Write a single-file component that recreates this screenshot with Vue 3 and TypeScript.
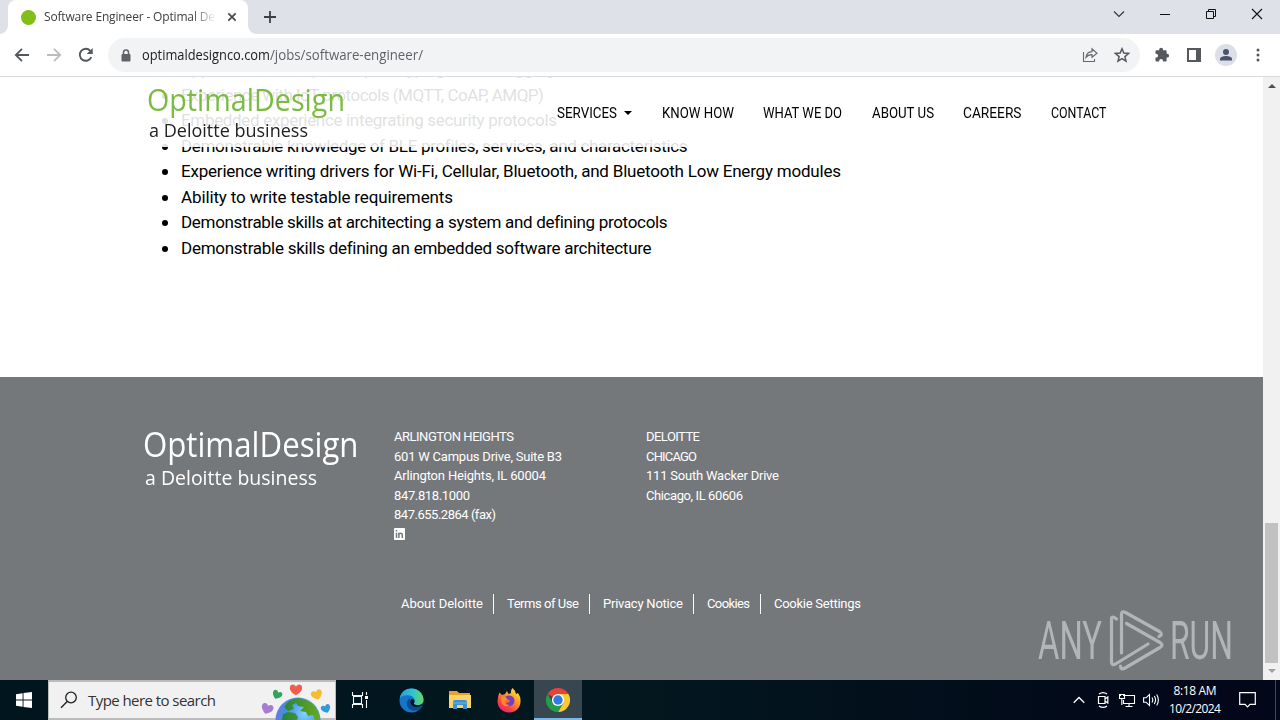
<script setup lang="ts">
import type { Directive } from 'vue'

// Fits a line of text to the given width, by tracking or, with .squeeze, by narrowing the glyphs.
const vFit: Directive<HTMLElement, number, 'squeeze'> = {
  mounted(el, { value, modifiers }) {
    const natural = el.getBoundingClientRect().width
    const count = (el.textContent ?? '').length
    if (modifiers.squeeze) {
      el.style.display = 'inline-block'
      el.style.transformOrigin = '0 50%'
      el.style.transform = `scaleX(${(value / natural).toFixed(4)})`
      el.style.marginRight = `${(value - natural).toFixed(2)}px`
    } else if (count > 1) {
      const gap = (value - natural) / (count - 1)
      el.style.letterSpacing = `${gap.toFixed(4)}px`
      el.style.marginRight = `${(-gap).toFixed(4)}px`
    }
  },
}

interface Line { text: string; width: number }

const skills: Line[] = [
  { text: 'Application development, prototyping and debugging', width: 374 },
  { text: 'Experience with IoT protocols (MQTT, CoAP, AMQP)', width: 363 },
  { text: 'Embedded experience integrating security protocols', width: 376 },
  { text: 'Demonstrable knowledge of BLE profiles, services, and characteristics', width: 506 },
  { text: 'Experience writing drivers for Wi-Fi, Cellular, Bluetooth, and Bluetooth Low Energy modules', width: 660 },
  { text: 'Ability to write testable requirements', width: 272 },
  { text: 'Demonstrable skills at architecting a system and defining protocols', width: 486 },
  { text: 'Demonstrable skills defining an embedded software architecture', width: 470 },
]

const nav: (Line & { menu?: boolean })[] = [
  { text: 'SERVICES', width: 60, menu: true },
  { text: 'KNOW HOW', width: 72 },
  { text: 'WHAT WE DO', width: 79 },
  { text: 'ABOUT US', width: 62 },
  { text: 'CAREERS', width: 58.5 },
  { text: 'CONTACT', width: 55.5 },
]

const heights: Line[] = [
  { text: 'ARLINGTON HEIGHTS', width: 120 },
  { text: '601 W Campus Drive, Suite B3', width: 168 },
  { text: 'Arlington Heights, IL 60004', width: 152 },
  { text: '847.818.1000', width: 76 },
  { text: '847.655.2864 (fax)', width: 102 },
]

const chicago: Line[] = [
  { text: 'DELOITTE', width: 54 },
  { text: 'CHICAGO', width: 51 },
  { text: '111 South Wacker Drive', width: 133 },
  { text: 'Chicago, IL 60606', width: 97 },
]

const legal: Line[] = [
  { text: 'About Deloitte', width: 82 },
  { text: 'Terms of Use', width: 72 },
  { text: 'Privacy Notice', width: 80 },
  { text: 'Cookies', width: 43 },
  { text: 'Cookie Settings', width: 87 },
]
</script>

<template>
  <div class="screen">
    <div class="tabstrip">
      <div class="tab">
        <span class="favicon"></span>
        <span class="tab-title"><span v-fit="193">Software Engineer - Optimal Design</span></span>
        <svg class="tab-close" width="10" height="10" viewBox="0 0 10 10"><path d="M1.3 1.3 8.7 8.7M8.7 1.3 1.3 8.7" stroke="#45494d" stroke-width="1.7" /></svg>
      </div>
      <svg class="new-tab" width="12" height="12" viewBox="0 0 12 12"><path d="M6 0V12M0 6H12" stroke="#3c4043" stroke-width="1.8" /></svg>
      <div class="window-buttons">
        <svg width="12" height="12" viewBox="0 0 12 12"><path d="M1 3.5 6 8.5 11 3.5" fill="none" stroke="#303236" stroke-width="1.1" /></svg>
        <svg width="12" height="12" viewBox="0 0 12 12"><path d="M1 6.5H11" stroke="#111" /></svg>
        <svg width="12" height="12" viewBox="0 0 12 12"><path d="M1.5 3.5H8.5V10.5H1.5ZM3.5 3.5V1.5H10.5V8.5H8.5" fill="none" stroke="#111" /></svg>
        <svg width="12" height="12" viewBox="0 0 12 12"><path d="M1 1 11 11M11 1 1 11" stroke="#111" stroke-width="1.1" /></svg>
      </div>
    </div>

    <div class="toolbar">
      <svg class="nav-icon" width="16" height="16" viewBox="0 0 16 16"><path d="M15 8H2M8 1.8 1.8 8 8 14.2" fill="none" stroke="#54585c" stroke-width="1.8" /></svg>
      <svg class="nav-icon" width="16" height="16" viewBox="0 0 16 16"><path d="M1 8H14M8 1.8 14.2 8 8 14.2" fill="none" stroke="#babcbe" stroke-width="1.8" /></svg>
      <svg class="nav-icon" width="16" height="16" viewBox="0 0 16 16"><path d="M13.3 10.2A6 6 0 1 1 12.3 3.8" fill="none" stroke="#54585c" stroke-width="1.9" /><path d="M14.7 1V7H8.7Z" fill="#54585c" /></svg>
      <div class="omnibox">
        <svg class="lock" width="10" height="13" viewBox="0 0 10 13"><path d="M2.5 6V3.4A2.5 2.5 0 0 1 7.5 3.4V6" fill="none" stroke="#5f6368" stroke-width="1.5" /><rect x=".5" y="5" width="9" height="7.4" rx="1" fill="#5f6368" /></svg>
        <span class="host" v-fit.squeeze="128">optimaldesignco.com</span><span class="path" v-fit.squeeze="153">/jobs/software-engineer/</span>
        <svg class="share" width="16" height="16" viewBox="0 0 16 16"><path d="M1.5 5V14.5H12.5V12M4 10.5C4.3 6.8 6.5 4.8 10 4.6V1.8L15 6.3 10 10.3V7.6C7.4 7.5 5.5 8.4 4 10.5Z" fill="none" stroke="#64686c" stroke-width="1.1" /></svg>
        <svg width="16" height="16" viewBox="0 0 16 16"><path d="M8 1.8 9.8 6.1 14.5 6.5 10.9 9.6 12 14.2 8 11.7 4 14.2 5.1 9.6 1.5 6.5 6.2 6.1Z" fill="none" stroke="#55595d" stroke-width="1.5" /></svg>
      </div>
      <svg class="puzzle" width="16" height="16" viewBox="0 0 16 16"><path d="M1.5 4.2Q1.5 3.2 2.5 3.2H5.2V2.6A1.9 1.9 0 0 1 9 2.6V3.2H11.6Q12.6 3.2 12.6 4.2V6.8H13.2A1.9 1.9 0 0 1 13.2 10.6H12.6V13.4Q12.6 14.4 11.6 14.4H9V13.8A1.9 1.9 0 0 0 5.2 13.8V14.4H2.5Q1.5 14.4 1.5 13.4V10.6H2.1A1.9 1.9 0 0 0 2.1 6.8H1.5Z" fill="#55595d" /></svg>
      <svg class="panel" width="14" height="14" viewBox="0 0 14 14"><path d="M0 0H14V14H0ZM2 2V12H9V2Z" fill="#55595d" fill-rule="evenodd" /></svg>
      <span class="avatar"><svg width="22" height="22" viewBox="0 0 22 22"><circle cx="11" cy="8" r="3" fill="#4b5270" /><path d="M5 16.5V15C5 12.8 9 12 11 12S17 12.8 17 15V16.5Z" fill="#4b5270" /></svg></span>
      <svg class="kebab" width="4" height="14" viewBox="0 0 4 14"><circle cx="2" cy="2" r="1.5" /><circle cx="2" cy="7" r="1.5" /><circle cx="2" cy="12" r="1.5" /></svg>
    </div>

    <div class="viewport">
      <div class="page">
        <header class="site-header">
          <div class="brand">
            <div class="brand-name"><span v-fit.squeeze="198">OptimalDesign</span></div>
            <div class="brand-sub"><span v-fit.squeeze="159">a Deloitte business</span></div>
          </div>
          <nav class="site-nav">
            <a v-for="item in nav" :key="item.text"><span v-fit.squeeze="item.width">{{ item.text }}</span><i v-if="item.menu" class="caret"></i></a>
          </nav>
        </header>
        <ul class="skills">
          <li v-for="item in skills" :key="item.text"><span v-fit="item.width">{{ item.text }}</span></li>
        </ul>
        <footer class="site-footer">
          <div class="footer-cols">
            <div class="footer-brand">
              <div class="brand-name"><span v-fit.squeeze="215.5">OptimalDesign</span></div>
              <div class="brand-sub"><span v-fit.squeeze="172">a Deloitte business</span></div>
            </div>
            <address class="office">
              <div v-for="line in heights" :key="line.text"><span v-fit="line.width">{{ line.text }}</span></div>
              <svg class="linkedin" width="11" height="12" viewBox="0 0 11 12"><rect width="11" height="12" rx=".7" fill="#fff" /><path d="M2.5 4.8V10M2.5 2V3.4M4.9 4.8V10M4.9 7C4.9 4.8 8.3 4.6 8.3 7V10" fill="none" stroke="#75787b" stroke-width="1.5" /></svg>
            </address>
            <address class="office">
              <div v-for="line in chicago" :key="line.text"><span v-fit="line.width">{{ line.text }}</span></div>
            </address>
          </div>
          <div class="legal">
            <a v-for="link in legal" :key="link.text"><span v-fit="link.width">{{ link.text }}</span></a>
          </div>
        </footer>
        <div class="watermark">
          <span v-fit.squeeze="64">ANY</span>
          <svg width="56" height="64" viewBox="0 0 56 64"><g fill="none" stroke="#b2b5b7" stroke-width="3.2" stroke-linejoin="round" stroke-linecap="round"><path d="M7.500 10Q2.500 6 2.500 10V53Q2.500 57 6.500 55L39 35" /><path d="M12.500 44V5Q12.500 1.500 16.500 3.500L50.500 22.500Q54.500 25.500 50 27.500" /><path d="M17.500 14.500 51 33.500Q55 36 51 38.500L16 59Q11.500 61.500 11.500 57" /></g></svg>
          <span v-fit.squeeze="63">RUN</span>
        </div>
      </div>
      <div class="scrollbar">
        <i class="arrow up"></i>
        <i class="thumb"></i>
        <i class="arrow down"></i>
      </div>
    </div>

    <div class="taskbar">
      <div class="start"><svg width="16" height="16" viewBox="0 0 16 16"><path d="M0 2.3 6.6 1.2V7.5H0ZM7.5 1.1 16 0V7.5H7.5ZM0 8.4H6.6V14.8L0 13.8ZM7.5 8.4H16V16L7.5 14.9Z" fill="#fff" /></svg></div>
      <div class="search">
        <svg class="lens" width="18" height="18" viewBox="0 0 18 18"><circle cx="11" cy="6.5" r="5.3" fill="none" stroke="#222" stroke-width="1.3" /><path d="M7.2 10.5 1 16.7" stroke="#222" stroke-width="1.4" /></svg>
        <span v-fit="128">Type here to search</span>
        <svg class="earth" width="72" height="36" viewBox="0 0 72 36">
          <defs>
            <radialGradient id="sea" cx=".65" cy=".35" r=".7"><stop offset="0" stop-color="#86d4ff" /><stop offset=".55" stop-color="#3f91e6" /><stop offset="1" stop-color="#6a78df" /></radialGradient>
            <linearGradient id="land" x1="0" x2="1"><stop offset="0" stop-color="#26823f" /><stop offset="1" stop-color="#69a91e" /></linearGradient>
            <path id="heart" d="M0 4.8C-3.5 2.8-6.2 0-5.5-2.8-4.8-5.4-1.5-5.8 0-3 1.5-5.8 4.8-5.4 5.5-2.8 6.2 0 3.5 2.8 0 4.8Z" />
          </defs>
          <circle cx="37" cy="36" r="22.5" fill="url(#sea)" />
          <path d="M26 19Q32 13.500 40 14.500 52 17 57 27L59 36H54L52 31 47 32 45 28 39 27 43 23 37 22 35 19 31 21 33 25 27 27 23 23ZM22 30 27 28 34 29 37 33 36 36H21Z" fill="url(#land)" />
          <use href="#heart" transform="translate(35 6) scale(1.1)" fill="#f05d4e" />
          <use href="#heart" transform="translate(16 11) rotate(25) scale(.87)" fill="#31a45b" />
          <use href="#heart" transform="translate(56 11) rotate(-20) scale(1)" fill="#f4bd30" />
          <use href="#heart" transform="translate(6 25) rotate(20) scale(1.06)" fill="#a67bd2" />
          <use href="#heart" transform="translate(65 25) rotate(-20) scale(.85)" fill="#3299dc" />
        </svg>
      </div>
      <div class="apps">
        <div class="app task-view"><svg width="18" height="16" viewBox="0 0 18 16"><path d="M1.5 0V3.5H11.5V0M1.5 16V12.5H11.5V16M2.5 4.5V11.5H10.5V4.5ZM15.5 0V3M15.5 8V16" fill="none" stroke="#f3f5f6" stroke-width="1.1" /><rect x="14" y="4" width="3" height="3" fill="#fff" /></svg></div>
        <div class="app">
          <svg width="25" height="25" viewBox="0 0 25 25">
            <defs><linearGradient id="wave" x1="0" x2="1"><stop offset="0" stop-color="#249edd" /><stop offset=".55" stop-color="#31c4d0" /><stop offset="1" stop-color="#68d85b" /></linearGradient></defs>
            <circle cx="12.5" cy="12.5" r="12" fill="#1674c9" />
            <path d="M.8 10C2 3.5 7.3.4 12.5.5 20 .7 24.7 6.5 24.5 12 24.3 16 20.5 18 16.2 16.8 14.3 16.2 14.8 15.3 15.5 14 16.5 11.5 14.5 8 10 7.3 6 6.8 2.6 8 .8 10Z" fill="url(#wave)" />
            <path d="M12 10C10 12 10.4 16 13.8 18 17 19.8 20.5 19.4 23.2 18 19.5 24.5 11.5 24 8.8 19 6.7 15 8.5 11 12 10Z" fill="#0c4a90" />
            <path d="M12.5 11C10.5 13 11 16.3 14 18.2 17.5 20 21 19.2 23.6 17L24.8 14C22.8 17.5 19.3 17.8 16.2 16.8 14.3 16.2 14.8 15.3 15.5 14 16 12 14.5 10.5 12.5 11Z" fill="#04141e" />
          </svg>
        </div>
        <div class="app"><svg width="22" height="20" viewBox="0 0 22 20"><path d="M0 1H8L10 3H21V8H0Z" fill="#e7a32f" /><path d="M0 5H22V18H0Z" fill="#fbd36b" /><path d="M4 19V12Q4 10 6 10H16Q18 10 18 12V19H14V15H8V19Z" fill="#3b93cf" /><path d="M4 13H18" stroke="#66b9e6" /></svg></div>
        <div class="app">
          <svg width="24" height="25" viewBox="0 0 24 25">
            <defs><linearGradient id="flame" x1=".9" y1="0" x2=".2" y2="1"><stop offset="0" stop-color="#fff04b" /><stop offset=".4" stop-color="#ff9c25" /><stop offset=".75" stop-color="#fb3f47" /><stop offset="1" stop-color="#e72277" /></linearGradient></defs>
            <path d="M2.5 4.5 5 7 8 6 10 3 11.5 6 14 5Q13.5 2 15.5 0 18 2 19 6L21 5Q24 9 23.5 14C23 21 17.5 24.8 12 24.5 5 24.4.4 19 .5 13Q.6 8 2.5 4.5Z" fill="url(#flame)" />
            <path d="M8 9Q13 6 16.5 9.5 19 14 15.5 17 11 20 7.5 16L12 14Q14 12 10.5 11.5Z" fill="#7341c3" />
            <path d="M4.2 9Q8 7 10 11L8.5 13Q8 17 12.5 17 7.5 20.5 4.5 15Z" fill="#ff8a2a" />
          </svg>
        </div>
        <div class="app active">
          <svg width="24" height="24" viewBox="0 0 24 24"><path d="M12 12 1.6 6A12 12 0 0 1 22.4 6Z" fill="#e6423a" /><path d="M12 6H22.4A12 12 0 0 1 12 24L17.2 15Z" fill="#fcc934" /><path d="M12 18 6.8 15 1.6 6A12 12 0 0 0 12 24L17.2 15Z" fill="#269b4b" /><circle cx="12" cy="12" r="6.1" fill="#fff" /><circle cx="12" cy="12" r="4.7" fill="#2d7be5" /></svg>
        </div>
      </div>
      <div class="tray">
        <svg width="12" height="8" viewBox="0 0 12 8"><path d="M.7 6.8 6 1.5 11.3 6.8" fill="none" stroke="#fff" stroke-width="1.3" /></svg>
        <svg class="meet" width="12" height="18" viewBox="0 0 12 18"><path d="M1.5 5.5H8V12.5H1.5ZM8 8 10.8 6V12L8 10M2 3Q6 .2 10 3M2 15Q6 17.8 10 15" fill="none" stroke="#fff" stroke-width="1.2" /></svg>
        <svg class="net" width="17" height="15" viewBox="0 0 17 15"><path d="M6 2.5H15.5V10.5H4.5V7M10 10.5V13.5M6.5 13.5H13.5M.5 1.5H5.5V5.5H.5ZM2.8 5.5V12M1.5 1.5V3M4.5 1.5V3" fill="none" stroke="#fff" stroke-width="1.1" /></svg>
        <svg class="sound" width="17" height="14" viewBox="0 0 17 14"><path d="M.6 4.8H3L6.5 1.5V12.5L3 9.2H.6ZM9 4.5Q10.5 7 9 9.5M11.3 3Q13.8 7 11.3 11M13.7 1.5Q17 7 13.7 12.5" fill="none" stroke="#fff" stroke-width="1.1" /></svg>
        <div class="clock"><div><span v-fit="43">8:18 AM</span></div><div><span v-fit="52">10/2/2024</span></div></div>
        <svg class="note" width="17" height="16" viewBox="0 0 17 16"><path d="M.7.7H16.3V12.3H11L8.5 14.8 6 12.3H.7Z" fill="none" stroke="#fff" stroke-width="1.2" /></svg>
        <i class="peek"></i>
      </div>
    </div>
  </div>
</template>

<style>
html, body { margin: 0; overflow: hidden; }
</style>

<style scoped>
.screen { width: 1280px; height: 720px; display: flex; flex-direction: column; overflow: hidden; background: #fff; font-family: "Open Sans", "Noto Sans", sans-serif; white-space: nowrap; }
.screen svg { display: block; flex: none; }
.screen span { flex: none; }

.tabstrip { height: 34px; flex: none; display: flex; align-items: center; background: #dee1e8; }
.tab { position: relative; width: 240px; height: 34px; margin-left: 8px; box-sizing: border-box; padding-left: 12px; display: flex; align-items: center; background: #fff; border-radius: 8px 8px 0 0; }
.tab::before, .tab::after { content: ""; position: absolute; bottom: 0; width: 8px; height: 8px; }
.tab::before { left: -8px; background: radial-gradient(circle at 0 0, transparent 7.5px, #fff 8px); }
.tab::after { right: -8px; background: radial-gradient(circle at 100% 0, transparent 7.5px, #fff 8px); }
.favicon { width: 15px; height: 15px; margin-left: .5px; border-radius: 50%; background: #83bd18; }
.tab-title { width: 172px; margin-left: 8.5px; overflow: hidden; font-size: 12px; line-height: 18px; color: #3c4043; -webkit-mask-image: linear-gradient(90deg, #000 148px, transparent 172px); mask-image: linear-gradient(90deg, #000 148px, transparent 172px); }
.tab-close { margin-left: 11px; }
.new-tab { margin-left: 16px; }
.window-buttons { display: flex; gap: 34px; margin-left: auto; margin-right: 17px; padding-bottom: 6px; }

.toolbar { height: 43px; flex: none; box-sizing: border-box; display: flex; align-items: center; padding-left: 14px; border-bottom: 1px solid #d9dcdc; background: #fff; }
.nav-icon { margin-right: 16px; }
.omnibox { width: 1032px; height: 34px; margin-left: -2px; box-sizing: border-box; padding: 0 10px 0 13px; display: flex; align-items: center; border-radius: 17px; background: #f1f3f4; font-size: 14px; line-height: 20px; }
.lock { margin-right: 11px; }
.host { color: #202124; }
.path { color: #5f6368; }
.share { margin-left: auto; margin-right: 16px; }
.puzzle { margin-left: 14px; }
.panel { margin-left: 17px; }
.avatar { margin-left: 14px; width: 22px; height: 22px; border-radius: 50%; background: #dcdfe8; }
.kebab { margin-left: 19px; fill: #55595d; }

.viewport { height: 603px; flex: none; display: flex; }
.page { position: relative; width: 1263px; height: 603px; overflow: hidden; background: #fff; font-family: Roboto, "Noto Sans", sans-serif; }
.site-header { position: absolute; z-index: 1; top: 0; left: 0; right: 0; height: 70px; display: flex; background: rgba(255, 255, 255, .88); }
.brand { width: 557px; box-sizing: border-box; padding-left: 147px; font-family: "Open Sans", "Noto Sans", sans-serif; }
.brand-name { line-height: 44px; }
.brand .brand-name { height: 42px; font-size: 31px; color: #7cbb42; }
.brand .brand-sub { font-size: 18px; line-height: 22px; color: #202322; padding-left: 1.5px; }
.site-nav { display: flex; gap: 29.6px; height: 72px; align-items: center; font-size: 14.5px; color: #000; }
.site-nav a { display: flex; align-items: center; }
.caret { width: 0; border: 4px solid transparent; border-top-color: #000; border-bottom: 0; margin-left: 7px; }
.skills { list-style: none; margin: -21px 0 0; padding: 0 0 0 181px; height: 321px; font-size: 17px; color: #000; }
.skills li { position: relative; height: 25.5px; line-height: 26px; }
.skills li::before { content: ""; position: absolute; left: -19px; top: 11px; width: 6px; height: 6px; border-radius: 50%; background: #000; }
.site-footer { height: 303px; box-sizing: border-box; padding-top: 50px; background: #75787b; color: #fff; }
.footer-cols { display: flex; height: 167px; }
.footer-brand { width: 394px; box-sizing: border-box; padding-left: 143px; font-family: "Open Sans", "Noto Sans", sans-serif; }
.footer-brand .brand-name { height: 39px; line-height: 34px; font-size: 34px; }
.footer-brand .brand-sub { font-size: 20px; line-height: 24px; padding-left: 2px; }
.office { font-style: normal; font-size: 13px; line-height: 19.5px; width: 252px; }
.linkedin { margin-top: 3px; }
.legal { display: flex; height: 20px; margin-left: 401px; font-size: 13px; line-height: 20px; }
.legal a { display: block; }
.legal a:not(:last-child) { border-right: 1px solid #fff; margin-right: 13px; padding-right: 10px; }
.watermark { position: absolute; left: 1038px; top: 532px; display: flex; align-items: center; font-size: 53px; line-height: 64px; color: #b2b5b7; height: 64px; }
.watermark svg { margin: 0 5px 0 7px; }

.scrollbar { width: 17px; display: flex; flex-direction: column; align-items: center; background: #f1f1f1; }
.arrow { width: 0; border: 4px solid transparent; }
.up { border-top: 0; border-bottom-color: #505050; margin-top: 7px; }
.down { border-bottom: 0; border-top-color: #a0a0a0; margin-top: 6px; }
.thumb { width: 13px; height: 140px; margin-top: 435px; background: #c1c1c1; }

.taskbar { height: 40px; flex: none; display: flex; background: linear-gradient(90deg, #00151e 0, #03171f 50%, #020a19 85%, #02071a); color: #fff; }
.start { width: 48px; display: flex; align-items: center; justify-content: center; }
.search { position: relative; width: 288px; height: 40px; box-sizing: border-box; padding-left: 11px; display: flex; align-items: center; border: 1px solid #bbb; border-width: 2px 1px; background: #f1f1f1; color: #333; font-size: 15px; }
.lens { margin-right: 10px; }
.earth { position: absolute; right: 2px; bottom: -2px; }
.apps { display: flex; gap: 1px; }
.app { width: 48px; display: flex; align-items: center; justify-content: center; }
.task-view { margin-right: 2px; }
.active { box-sizing: border-box; background: #38474f; border-bottom: 2px solid #76b9ed; padding-top: 2px; }
.tray { display: flex; align-items: center; margin-left: auto; }
.meet { margin-left: 12px; }
.net { margin-left: 10px; }
.sound { margin-left: 7px; }
.clock { width: 70px; padding-right: 2px; text-align: center; font-size: 12px; line-height: 18px; }
.note { margin-left: 7px; }
.peek { width: 1px; height: 40px; margin-left: 19px; margin-right: 4px; background: #41485a; }
</style>
